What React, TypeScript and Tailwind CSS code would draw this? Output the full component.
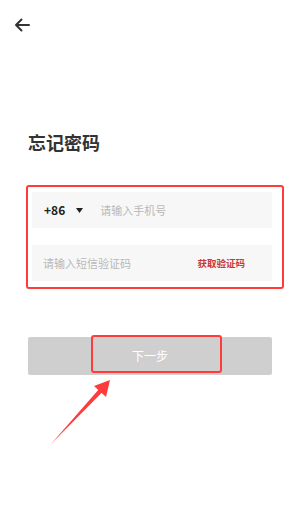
const FONT = "font-['Noto_Sans_CJK_SC','Noto_Sans',sans-serif]";

export default function App() {
  return (
    <div className={`relative w-[300px] h-[517px] bg-white overflow-hidden ${FONT}`}>
      <div className="pt-[17px] pl-[14px] h-[33px]">
        <svg width="16" height="16" viewBox="0 0 16 16" fill="none">
          <path
            d="M15 8H2M7.5 2.5L2 8l5.5 5.5"
            stroke="#333"
            strokeWidth="2"
            strokeLinecap="round"
            strokeLinejoin="round"
          />
        </svg>
      </div>

      <h1 className="mt-[97px] ml-[28px] text-[18px] leading-[24px] font-bold text-[#333]">
        忘记密码
      </h1>

      <div className="mt-[31px] ml-[26px] w-[258px] border-2 border-[#ff3b3b] rounded-[3px] pt-[5px] pl-[4px] pr-[10px] pb-[6px] flex flex-col gap-[17px]">
        <div className="h-[36px] bg-[#f7f7f7] flex items-center pl-[12px]">
          <span className="text-[12px] font-bold text-[#222]">+86</span>
          <svg className="ml-[11px]" width="7" height="5" viewBox="0 0 7 5">
            <path d="M0 0h7L3.5 5z" fill="#222" />
          </svg>
          <span className="ml-[17px] text-[11px] text-[#b8b8b8]">请输入手机号</span>
        </div>
        <div className="h-[36px] bg-[#f7f7f7] flex items-center justify-between pl-[11px] pr-[27px]">
          <span className="text-[11px] text-[#b8b8b8]">请输入短信验证码</span>
          <span className="text-[9.5px] font-bold text-[#c9383a]">获取验证码</span>
        </div>
      </div>

      <div className="relative mt-[48px] ml-[28px] w-[244px] h-[38px] bg-[#cfcfcf] rounded-[2px] flex items-center justify-center">
        <span className="text-[12px] text-white">下一步</span>
        <div className="absolute left-[63px] top-[-2px] w-[131px] h-[38px] border-2 border-[#ff3b3b] rounded-[3px]" />
      </div>

      <svg
        className="absolute left-0 top-0 pointer-events-none"
        width="300"
        height="517"
        viewBox="0 0 300 517"
      >
        <path d="M51 444L99.5 388.5L103 391.5Z" fill="#ff3b3b" />
        <path d="M110 380L94 386L106 397Z" fill="#ff3b3b" />
      </svg>
    </div>
  );
}
